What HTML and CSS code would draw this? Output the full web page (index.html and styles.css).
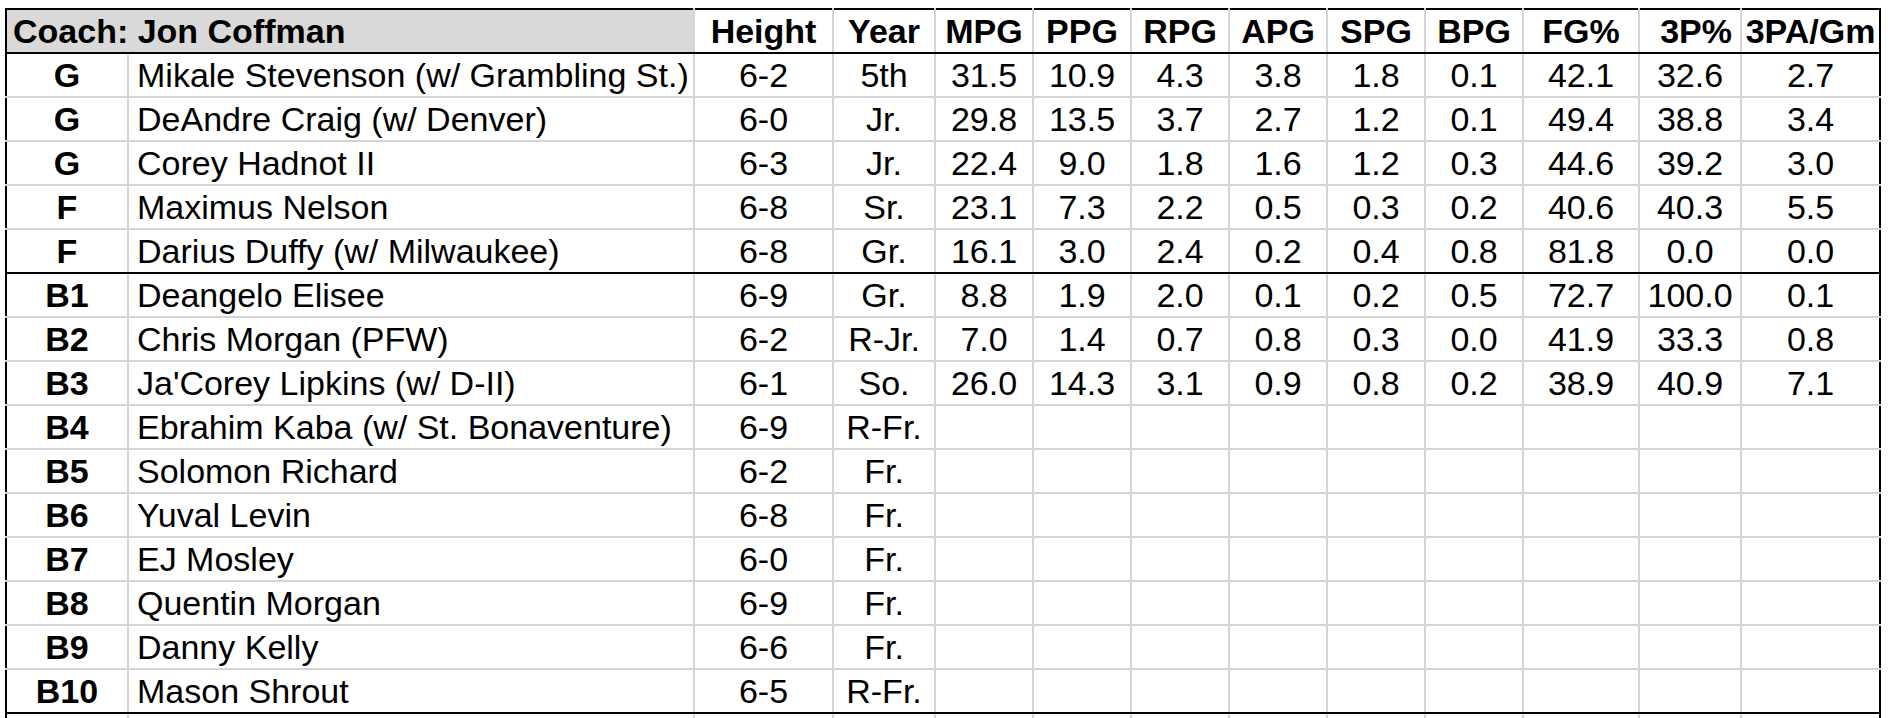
FILE: index.html
```html
<!DOCTYPE html>
<html>
<head>
<meta charset="utf-8">
<link rel="stylesheet" href="styles.css">
</head>
<body>
<table class="roster">
  <colgroup>
    <col class="c-pos"><col class="c-name"><col class="c-ht"><col class="c-yr">
    <col class="c-num"><col class="c-num"><col class="c-num"><col class="c-num"><col class="c-num"><col class="c-num">
    <col class="c-fg"><col class="c-3p"><col class="c-3pa">
  </colgroup>
  <thead>
    <tr class="head">
      <th colspan="2" class="coach">Coach: Jon Coffman</th>
      <th>Height</th><th>Year</th><th>MPG</th><th>PPG</th><th>RPG</th><th>APG</th><th>SPG</th><th>BPG</th><th>FG%</th><th class="right">3P%</th><th>3PA/Gm</th>
    </tr>
  </thead>
  <tbody class="starters">
    <tr><td class="pos">G</td><td class="name">Mikale Stevenson (w/ Grambling St.)</td><td>6-2</td><td>5th</td><td>31.5</td><td>10.9</td><td>4.3</td><td>3.8</td><td>1.8</td><td>0.1</td><td>42.1</td><td>32.6</td><td>2.7</td></tr>
    <tr><td class="pos">G</td><td class="name">DeAndre Craig (w/ Denver)</td><td>6-0</td><td>Jr.</td><td>29.8</td><td>13.5</td><td>3.7</td><td>2.7</td><td>1.2</td><td>0.1</td><td>49.4</td><td>38.8</td><td>3.4</td></tr>
    <tr><td class="pos">G</td><td class="name">Corey Hadnot II</td><td>6-3</td><td>Jr.</td><td>22.4</td><td>9.0</td><td>1.8</td><td>1.6</td><td>1.2</td><td>0.3</td><td>44.6</td><td>39.2</td><td>3.0</td></tr>
    <tr><td class="pos">F</td><td class="name">Maximus Nelson</td><td>6-8</td><td>Sr.</td><td>23.1</td><td>7.3</td><td>2.2</td><td>0.5</td><td>0.3</td><td>0.2</td><td>40.6</td><td>40.3</td><td>5.5</td></tr>
    <tr class="last"><td class="pos">F</td><td class="name">Darius Duffy (w/ Milwaukee)</td><td>6-8</td><td>Gr.</td><td>16.1</td><td>3.0</td><td>2.4</td><td>0.2</td><td>0.4</td><td>0.8</td><td>81.8</td><td>0.0</td><td>0.0</td></tr>
  </tbody>
  <tbody class="bench">
    <tr><td class="pos">B1</td><td class="name">Deangelo Elisee</td><td>6-9</td><td>Gr.</td><td>8.8</td><td>1.9</td><td>2.0</td><td>0.1</td><td>0.2</td><td>0.5</td><td>72.7</td><td>100.0</td><td>0.1</td></tr>
    <tr><td class="pos">B2</td><td class="name">Chris Morgan (PFW)</td><td>6-2</td><td>R-Jr.</td><td>7.0</td><td>1.4</td><td>0.7</td><td>0.8</td><td>0.3</td><td>0.0</td><td>41.9</td><td>33.3</td><td>0.8</td></tr>
    <tr><td class="pos">B3</td><td class="name">Ja'Corey Lipkins (w/ D-II)</td><td>6-1</td><td>So.</td><td>26.0</td><td>14.3</td><td>3.1</td><td>0.9</td><td>0.8</td><td>0.2</td><td>38.9</td><td>40.9</td><td>7.1</td></tr>
    <tr><td class="pos">B4</td><td class="name">Ebrahim Kaba (w/ St. Bonaventure)</td><td>6-9</td><td>R-Fr.</td><td></td><td></td><td></td><td></td><td></td><td></td><td></td><td></td><td></td></tr>
    <tr><td class="pos">B5</td><td class="name">Solomon Richard</td><td>6-2</td><td>Fr.</td><td></td><td></td><td></td><td></td><td></td><td></td><td></td><td></td><td></td></tr>
    <tr><td class="pos">B6</td><td class="name">Yuval Levin</td><td>6-8</td><td>Fr.</td><td></td><td></td><td></td><td></td><td></td><td></td><td></td><td></td><td></td></tr>
    <tr><td class="pos">B7</td><td class="name">EJ Mosley</td><td>6-0</td><td>Fr.</td><td></td><td></td><td></td><td></td><td></td><td></td><td></td><td></td><td></td></tr>
    <tr><td class="pos">B8</td><td class="name">Quentin Morgan</td><td>6-9</td><td>Fr.</td><td></td><td></td><td></td><td></td><td></td><td></td><td></td><td></td><td></td></tr>
    <tr><td class="pos">B9</td><td class="name">Danny Kelly</td><td>6-6</td><td>Fr.</td><td></td><td></td><td></td><td></td><td></td><td></td><td></td><td></td><td></td></tr>
    <tr class="last"><td class="pos">B10</td><td class="name">Mason Shrout</td><td>6-5</td><td>R-Fr.</td><td></td><td></td><td></td><td></td><td></td><td></td><td></td><td></td><td></td></tr>
  </tbody>
  <tbody class="extra">
    <tr><td></td><td></td><td></td><td></td><td></td><td></td><td></td><td></td><td></td><td></td><td></td><td></td><td></td></tr>
  </tbody>
</table>
</body>
</html>
```

FILE: styles.css
```css
html, body {
  margin: 0;
  padding: 0;
  background: #ffffff;
  overflow: hidden;
}

body {
  padding: 8px 0 0 5px;
  font-family: "Liberation Sans", Arial, sans-serif;
  color: #000000;
}

.roster {
  border-collapse: collapse;
  table-layout: fixed;
  width: 1876px;
  border: 2px solid #000000;
  font-size: 34px;
}

.c-pos { width: 122px; }
.c-name { width: 566px; }
.c-ht { width: 139px; }
.c-yr { width: 102px; }
.c-num { width: 98px; }
.c-fg { width: 116px; }
.c-3p { width: 102px; }
.c-3pa { width: 139px; }

.roster tr {
  height: 44px;
}

.roster th,
.roster td {
  padding: 0;
  border: 2px solid #d4d4d4;
  text-align: center;
  vertical-align: middle;
  white-space: nowrap;
  overflow: hidden;
  line-height: 38px;
}

.roster th {
  font-weight: bold;
  border-bottom: 2px solid #000000;
  border-top: 2px solid #000000;
}

.roster th.coach {
  background: #d9d9d9;
  text-align: left;
  padding-left: 6px;
}

.roster th.right {
  text-align: right;
  padding-right: 8px;
}

.roster td.pos {
  font-weight: bold;
}

.roster td.name {
  text-align: left;
  padding-left: 8px;
}

.roster tr.last td {
  border-bottom: 2px solid #000000;
}

.roster tr:first-child > *:first-child,
.roster td:first-child {
  border-left: 2px solid #000000;
}

.roster th:last-child,
.roster td:last-child {
  border-right: 2px solid #000000;
}
```
